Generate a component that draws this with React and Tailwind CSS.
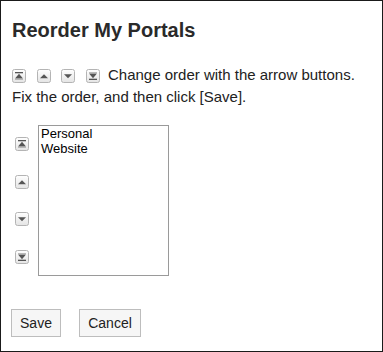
import React from "react";

function Arrow({ kind, className = "" }) {
  return (
    <svg width="14" height="14" viewBox="0 0 14 14" className={"inline-block shrink-0 " + className}>
      <defs>
        <linearGradient id={"g" + kind} x1="0" y1="0" x2="0" y2="1">
          <stop offset="0" stopColor="#ffffff" />
          <stop offset="1" stopColor="#e4e4e4" />
        </linearGradient>
      </defs>
      <rect x="0.5" y="0.5" width="13" height="13" rx="2" fill={"url(#g" + kind + ")"} stroke="#b4b4b4" />
      {kind === "top" && (
        <>
          <rect x="3" y="3" width="8" height="1.3" fill="#555" />
          <path d="M7 4.8 L11 9.6 L3 9.6 Z" fill="#555" />
          <rect x="3" y="10" width="8" height="0.8" fill="#aaa" />
        </>
      )}
      {kind === "up" && <path d="M7 5.2 L11 9.2 L3 9.2 Z" fill="#555" />}
      {kind === "down" && <path d="M3 5.3 L11 5.3 L7 9.3 Z" fill="#555" />}
      {kind === "bottom" && (
        <>
          <rect x="3" y="3.2" width="8" height="0.8" fill="#aaa" />
          <path d="M3 4.4 L11 4.4 L7 9.2 Z" fill="#555" />
          <rect x="3" y="9.7" width="8" height="1.3" fill="#555" />
        </>
      )}
    </svg>
  );
}

export default function App() {
  return (
    <div
      className="w-[383px] h-[352px] border border-[#1a1a1a] bg-white pt-[17px] px-[11px] text-[#333]"
      style={{ fontFamily: '"Liberation Sans", Arial, sans-serif' }}
    >
      <h1 className="text-[20px] leading-[24px] font-bold text-[#2a2a2a]">Reorder My Portals</h1>
      <div className="mt-[22px] text-[15px] leading-[22px] text-[#222]">
        <Arrow kind="top" className="align-middle mr-[11px]" />
        <Arrow kind="up" className="align-middle mr-[10px]" />
        <Arrow kind="down" className="align-middle mr-[11px]" />
        <Arrow kind="bottom" className="align-middle mr-[8px]" />
        Change order with the arrow buttons.
        <br />
        Fix the order, and then click [Save].
      </div>
      <div className="mt-[17px] flex">
        <div className="ml-[3px] mr-[9px] flex flex-col justify-around">
          <Arrow kind="top" />
          <Arrow kind="up" />
          <Arrow kind="down" />
          <Arrow kind="bottom" />
        </div>
        <div className="w-[131px] h-[151px] border border-[#9a9a9a] pl-[2px] text-[13px] leading-[15px] text-black">
          <div>Personal</div>
          <div>Website</div>
        </div>
      </div>
      <div className="mt-[33px] -ml-px flex gap-[18px] text-[14px] text-[#222]">
        <button className="h-[28px] w-[50px] border border-[#bdbdbd] bg-[#f6f6f6]">Save</button>
        <button className="h-[28px] w-[62px] border border-[#bdbdbd] bg-[#f6f6f6]">Cancel</button>
      </div>
    </div>
  );
}
